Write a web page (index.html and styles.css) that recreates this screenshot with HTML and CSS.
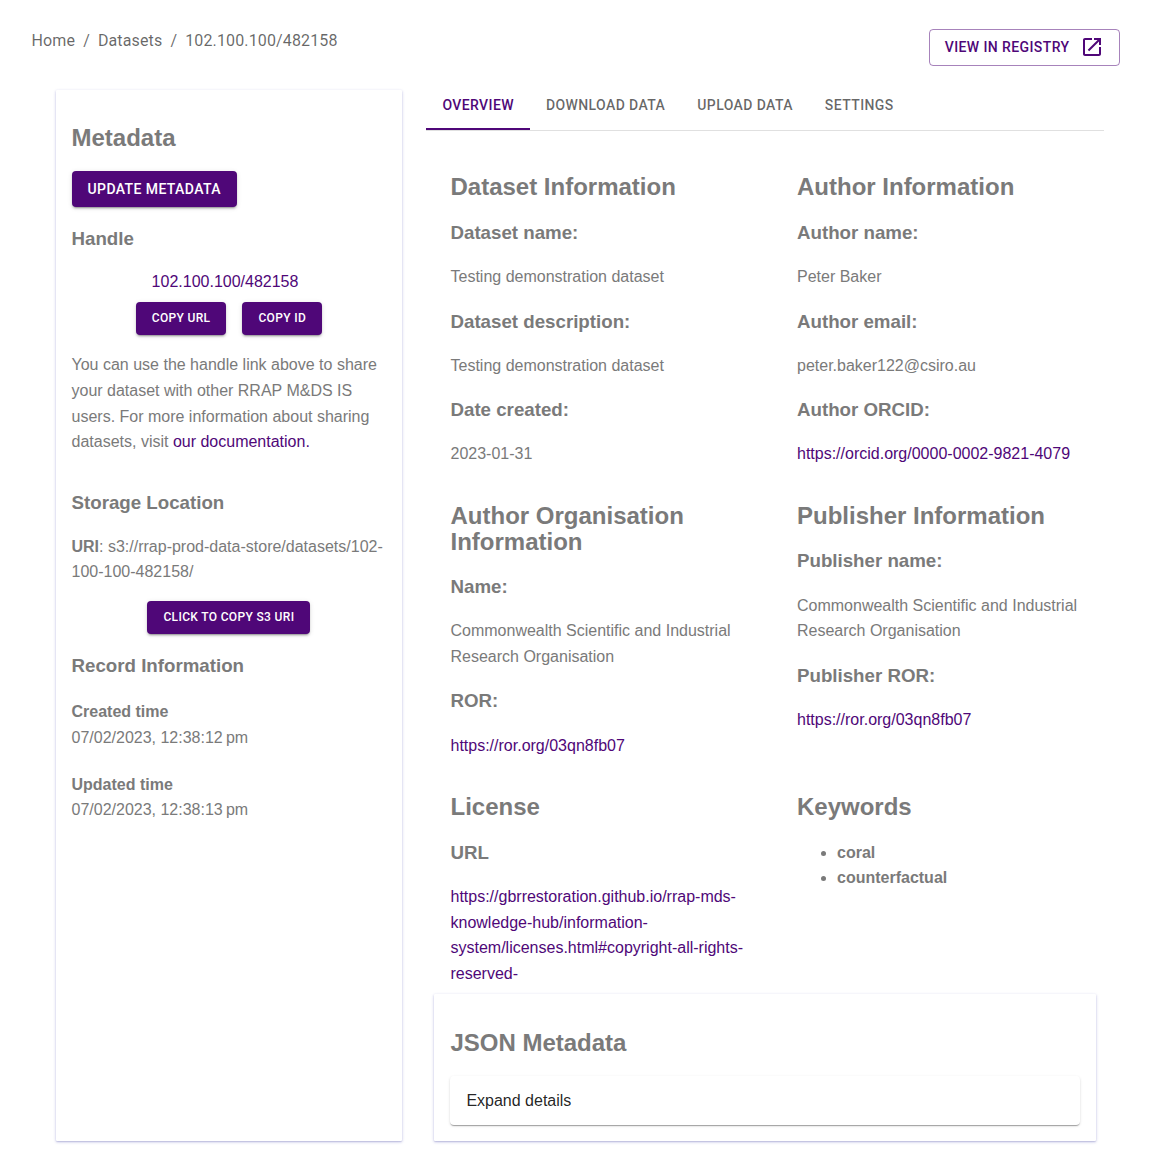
FILE: index.html
```html
<!DOCTYPE html>
<html lang="en">
<head>
<meta charset="utf-8">
<title>Dataset</title>
<link rel="stylesheet" href="styles.css">
</head>
<body>
<header class="topbar">
  <nav class="crumbs"><span>Home</span><span>/</span><span>Datasets</span><span>/</span><span>102.100.100/482158</span></nav>
  <button class="btn btn-outlined">View in registry
    <svg class="icon" viewBox="0 0 24 24"><path d="M19 19H5V5h7V3H5c-1.11 0-2 .9-2 2v14c0 1.1.89 2 2 2h14c1.1 0 2-.9 2-2v-7h-2v7zM14 3v2h3.59l-9.83 9.83 1.41 1.41L19 6.41V10h2V3h-7z"/></svg>
  </button>
</header>
<main class="layout">
  <aside class="card sidebar">
    <h2>Metadata</h2>
    <button class="btn">Update metadata</button>
    <h3>Handle</h3>
    <div class="handle"><a href="#">102.100.100/482158</a></div>
    <div class="actions"><button class="btn btn-small">Copy URL</button><button class="btn btn-small">Copy ID</button></div>
    <p>You can use the handle link above to share your dataset with other RRAP M&amp;DS IS users. For more information about sharing datasets, visit <a href="#">our documentation.</a></p>
    <section class="storage">
      <h3>Storage Location</h3>
      <p><b>URI</b>: s3://rrap-prod-data-store/datasets/102-100-100-482158/</p>
      <div class="actions"><button class="btn btn-small">Click to copy S3 URI</button></div>
    </section>
    <h3>Record Information</h3>
    <dl class="times">
      <div><dt>Created time</dt><dd>07/02/2023, 12:38:12&#8239;pm</dd></div>
      <div><dt>Updated time</dt><dd>07/02/2023, 12:38:13&#8239;pm</dd></div>
    </dl>
  </aside>
  <div class="content">
    <nav class="tabs"><a class="tab active">Overview</a><a class="tab">Download data</a><a class="tab">Upload data</a><a class="tab">Settings</a></nav>
    <div class="info">
      <section>
        <h2>Dataset Information</h2>
        <h3>Dataset name:</h3><p>Testing demonstration dataset</p>
        <h3>Dataset description:</h3><p>Testing demonstration dataset</p>
        <h3>Date created:</h3><p>2023-01-31</p>
      </section>
      <section>
        <h2>Author Information</h2>
        <h3>Author name:</h3><p>Peter Baker</p>
        <h3>Author email:</h3><p>peter.baker122@csiro.au</p>
        <h3>Author ORCID:</h3><p><a href="#">https://orcid.org/0000-0002-9821-4079</a></p>
      </section>
      <section>
        <h2>Author Organisation Information</h2>
        <h3>Name:</h3><p>Commonwealth Scientific and Industrial Research Organisation</p>
        <h3>ROR:</h3><p><a href="#">https://ror.org/03qn8fb07</a></p>
      </section>
      <section>
        <h2>Publisher Information</h2>
        <h3>Publisher name:</h3><p>Commonwealth Scientific and Industrial Research Organisation</p>
        <h3>Publisher ROR:</h3><p><a href="#">https://ror.org/03qn8fb07</a></p>
      </section>
      <section>
        <h2>License</h2>
        <h3>URL</h3><p><a href="#">https://gbrrestoration.github.io/rrap-mds-knowledge-hub/information-system/licenses.html#copyright-all-rights-reserved-</a></p>
      </section>
      <section>
        <h2>Keywords</h2>
        <ul><li>coral</li><li>counterfactual</li></ul>
      </section>
    </div>
    <section class="card json">
      <h2>JSON Metadata</h2>
      <div class="accordion">Expand details</div>
    </section>
  </div>
</main>
</body>
</html>
```
FILE: styles.css
```css
* { box-sizing: border-box; }
body {
  margin: 0;
  min-height: 100vh;
  font-family: "Liberation Sans", Arial, sans-serif;
  font-size: 16px;
  line-height: 25.6px;
  color: #7a7a7a;
  background: #fff;
}
h2 { font-size: 24px; margin: 19.92px 0; }
h3 { font-size: 18.72px; margin: 18.72px 0; }
p { margin: 16px 0; }
a { color: #4f0778; text-decoration: none; }
.topbar {
  display: flex;
  justify-content: space-between;
  align-items: flex-start;
  height: 89.5px;
  padding: 29px 31px 0 31.5px;
}
.crumbs {
  display: flex;
  gap: 8px;
  font: 400 16px/24px Roboto, sans-serif;
  letter-spacing: 0.14px;
  color: rgba(0, 0, 0, 0.6);
}
.btn {
  display: inline-flex;
  align-items: center;
  height: 36.5px;
  padding: 0 16px;
  border: 0;
  border-radius: 4px;
  background: #4f0778;
  color: #fff;
  font: 500 14px/24.5px Roboto, sans-serif;
  letter-spacing: 0.4px;
  text-transform: uppercase;
  white-space: nowrap;
  vertical-align: top;
  box-shadow: 0 3px 1px -2px rgba(0,0,0,.2), 0 2px 2px rgba(0,0,0,.14), 0 1px 5px rgba(0,0,0,.12);
}
.btn-small { height: 33px; font-size: 12px; letter-spacing: 0.34px; }
.btn-outlined {
  height: 37px;
  padding: 0 15px;
  gap: 10.5px;
  border: 1px solid rgba(79, 7, 120, 0.5);
  background: transparent;
  color: #4f0778;
  box-shadow: none;
}
.icon { width: 24px; height: 24px; fill: currentColor; margin-top: -1px; }
.layout { display: flex; gap: 23.7px; padding: 0 47px 25px 55.5px; }
.card {
  background: #fff;
  border-radius: 1px;
  box-shadow: 0 1px 3px rgba(50, 50, 170, .32), 0 1px 1px rgba(50, 50, 120, .1);
}
.sidebar { flex: none; width: 346.8px; height: 1051.5px; padding: 16px; display: flow-root; }
.handle { text-align: center; padding-right: 7.8px; margin-top: -1.2px; }
.actions { display: flex; justify-content: center; gap: 16px; }
.handle + .actions { margin-top: 6.7px; padding-bottom: 1.9px; }
.storage { display: flow-root; }
.storage .actions { padding-bottom: 0.2px; }
.times { margin: 20.8px 0 0; display: grid; gap: 21.4px; }
dt, li { font-weight: 700; }
dd { margin: 0; }
.content { flex: 1; min-width: 0; margin-top: -7.5px; }
.tabs { display: flex; height: 49px; border-bottom: 1px solid rgba(0, 0, 0, .12); }
.tab {
  padding: 0 15.6px 0 16.4px;
  font: 500 14px/46px Roboto, sans-serif;
  letter-spacing: 0.4px;
  text-transform: uppercase;
  color: rgba(0, 0, 0, .6);
  border-bottom: 2px solid transparent;
}
.active { color: #4f0778; border-color: #4f0778; }
.info {
  display: grid;
  grid-template-columns: 314.5px 314.5px;
  column-gap: 32px;
  padding: 23.5px 0 0 24.5px;
  margin-right: -8px;
}
.info section { display: flow-root; }
ul { margin: 0; padding-left: 40px; }
.json { display: flow-root; margin: -8.5px 8px 0; padding: 16px 16px 16px 16.4px; }
.json h2 { margin-bottom: 20.5px; }
.accordion {
  height: 49px;
  padding: 0 16px;
  border-radius: 4px;
  line-height: 49px;
  color: rgba(0, 0, 0, .87);
  box-shadow: 0 2px 1px -1px rgba(0,0,0,.2), 0 1px 1px rgba(0,0,0,.14), 0 1px 3px rgba(0,0,0,.12);
}
```
